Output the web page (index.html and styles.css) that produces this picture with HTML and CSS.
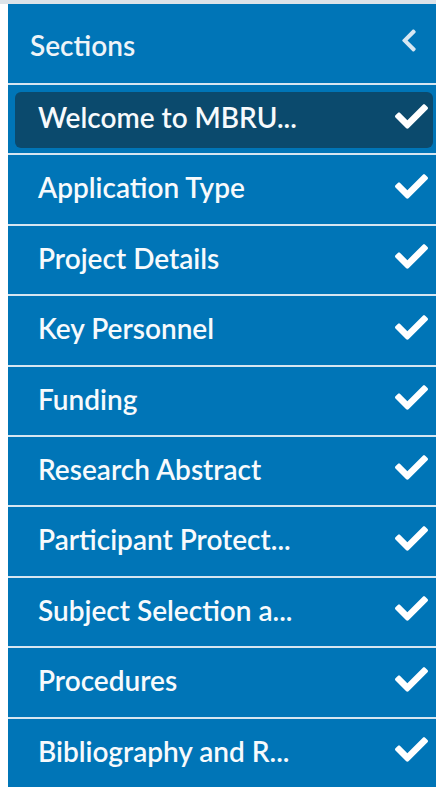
FILE: index.html
```html
<!DOCTYPE html>
<html lang="en">
<head>
<meta charset="utf-8">
<title>Sections</title>
<link rel="stylesheet" href="styles.css">
</head>
<body>
<nav class="sidebar">
  <div class="sidebar-header">
    <span class="sidebar-title">Sections</span>
    <svg class="collapse-icon" viewBox="20 30 280 452" aria-hidden="true"><path d="M34.52 239.03L228.87 44.69c9.37-9.37 24.57-9.37 33.94 0l22.67 22.67c9.36 9.36 9.37 24.52.04 33.9L131.49 256l154.02 154.75c9.34 9.38 9.32 24.54-.04 33.9l-22.67 22.67c-9.37 9.37-24.57 9.37-33.94 0L34.52 272.97c-9.37-9.37-9.37-24.57 0-33.94z"/></svg>
  </div>
  <ul class="section-list">
    <li class="section-row"><a class="section-link active"><span class="section-name">Welcome to MBRU...</span><svg class="check" viewBox="0 64 512 384"><path d="M173.9 439.4l-166.4-166.4c-10-10-10-26.2 0-36.2l36.2-36.2c10-10 26.2-10 36.2 0L192 312.7 432.1 72.6c10-10 26.2-10 36.2 0l36.2 36.2c10 10 10 26.2 0 36.2l-294.4 294.4c-10 10-26.2 10-36.2 0z"/></svg></a></li>
    <li class="section-row"><a class="section-link"><span class="section-name">Application Type</span><svg class="check" viewBox="0 64 512 384"><path d="M173.9 439.4l-166.4-166.4c-10-10-10-26.2 0-36.2l36.2-36.2c10-10 26.2-10 36.2 0L192 312.7 432.1 72.6c10-10 26.2-10 36.2 0l36.2 36.2c10 10 10 26.2 0 36.2l-294.4 294.4c-10 10-26.2 10-36.2 0z"/></svg></a></li>
    <li class="section-row"><a class="section-link"><span class="section-name">Project Details</span><svg class="check" viewBox="0 64 512 384"><path d="M173.9 439.4l-166.4-166.4c-10-10-10-26.2 0-36.2l36.2-36.2c10-10 26.2-10 36.2 0L192 312.7 432.1 72.6c10-10 26.2-10 36.2 0l36.2 36.2c10 10 10 26.2 0 36.2l-294.4 294.4c-10 10-26.2 10-36.2 0z"/></svg></a></li>
    <li class="section-row"><a class="section-link"><span class="section-name">Key Personnel</span><svg class="check" viewBox="0 64 512 384"><path d="M173.9 439.4l-166.4-166.4c-10-10-10-26.2 0-36.2l36.2-36.2c10-10 26.2-10 36.2 0L192 312.7 432.1 72.6c10-10 26.2-10 36.2 0l36.2 36.2c10 10 10 26.2 0 36.2l-294.4 294.4c-10 10-26.2 10-36.2 0z"/></svg></a></li>
    <li class="section-row"><a class="section-link"><span class="section-name">Funding</span><svg class="check" viewBox="0 64 512 384"><path d="M173.9 439.4l-166.4-166.4c-10-10-10-26.2 0-36.2l36.2-36.2c10-10 26.2-10 36.2 0L192 312.7 432.1 72.6c10-10 26.2-10 36.2 0l36.2 36.2c10 10 10 26.2 0 36.2l-294.4 294.4c-10 10-26.2 10-36.2 0z"/></svg></a></li>
    <li class="section-row"><a class="section-link"><span class="section-name">Research Abstract</span><svg class="check" viewBox="0 64 512 384"><path d="M173.9 439.4l-166.4-166.4c-10-10-10-26.2 0-36.2l36.2-36.2c10-10 26.2-10 36.2 0L192 312.7 432.1 72.6c10-10 26.2-10 36.2 0l36.2 36.2c10 10 10 26.2 0 36.2l-294.4 294.4c-10 10-26.2 10-36.2 0z"/></svg></a></li>
    <li class="section-row"><a class="section-link"><span class="section-name">Participant Protect...</span><svg class="check" viewBox="0 64 512 384"><path d="M173.9 439.4l-166.4-166.4c-10-10-10-26.2 0-36.2l36.2-36.2c10-10 26.2-10 36.2 0L192 312.7 432.1 72.6c10-10 26.2-10 36.2 0l36.2 36.2c10 10 10 26.2 0 36.2l-294.4 294.4c-10 10-26.2 10-36.2 0z"/></svg></a></li>
    <li class="section-row"><a class="section-link"><span class="section-name">Subject Selection a...</span><svg class="check" viewBox="0 64 512 384"><path d="M173.9 439.4l-166.4-166.4c-10-10-10-26.2 0-36.2l36.2-36.2c10-10 26.2-10 36.2 0L192 312.7 432.1 72.6c10-10 26.2-10 36.2 0l36.2 36.2c10 10 10 26.2 0 36.2l-294.4 294.4c-10 10-26.2 10-36.2 0z"/></svg></a></li>
    <li class="section-row"><a class="section-link"><span class="section-name">Procedures</span><svg class="check" viewBox="0 64 512 384"><path d="M173.9 439.4l-166.4-166.4c-10-10-10-26.2 0-36.2l36.2-36.2c10-10 26.2-10 36.2 0L192 312.7 432.1 72.6c10-10 26.2-10 36.2 0l36.2 36.2c10 10 10 26.2 0 36.2l-294.4 294.4c-10 10-26.2 10-36.2 0z"/></svg></a></li>
    <li class="section-row"><a class="section-link"><span class="section-name">Bibliography and R...</span><svg class="check" viewBox="0 64 512 384"><path d="M173.9 439.4l-166.4-166.4c-10-10-10-26.2 0-36.2l36.2-36.2c10-10 26.2-10 36.2 0L192 312.7 432.1 72.6c10-10 26.2-10 36.2 0l36.2 36.2c10 10 10 26.2 0 36.2l-294.4 294.4c-10 10-26.2 10-36.2 0z"/></svg></a></li>
  </ul>
</nav>
</body>
</html>
```
FILE: styles.css
```css
html, body {
  margin: 0;
  padding: 0;
  height: 100%;
  background: #ffffff;
  overflow: hidden;
}

body {
  border-top: 4px solid #dde3e8;
  box-sizing: border-box;
  padding-left: 8px;
  font-family: Lato, "Liberation Sans", sans-serif;
}

.sidebar {
  background: #0075b7;
  color: #f7fafc;
  min-height: 100%;
}

.sidebar-header {
  display: flex;
  align-items: center;
  justify-content: space-between;
  height: 81px;
  box-sizing: border-box;
  padding: 0 19px 0 22px;
  border-bottom: 2px solid #d6e6f1;
}

.sidebar-title {
  font-size: 28px;
  font-weight: 600;
  color: #eef4f8;
  margin-top: 2px;
}

.collapse-icon {
  width: 16px;
  height: 23px;
  fill: #d7e7f2;
  margin-bottom: 7px;
}

.section-list {
  list-style: none;
  margin: 0;
  padding: 0;
}

.section-row {
  height: 70.4px;
  box-sizing: border-box;
  border-bottom: 2px solid #d6e6f1;
  padding: 7px 3px 5px 7px;
}

.section-link {
  display: flex;
  align-items: center;
  justify-content: space-between;
  height: 56px;
  padding: 0 5px 0 23px;
  border-radius: 6px;
}

.section-link.active {
  background: #0b4a6d;
}

.section-name {
  font-size: 28px;
  font-weight: 600;
  margin-bottom: 6px;
}

.check {
  width: 33px;
  height: 25px;
  fill: #ffffff;
  margin-bottom: 8px;
}
```
